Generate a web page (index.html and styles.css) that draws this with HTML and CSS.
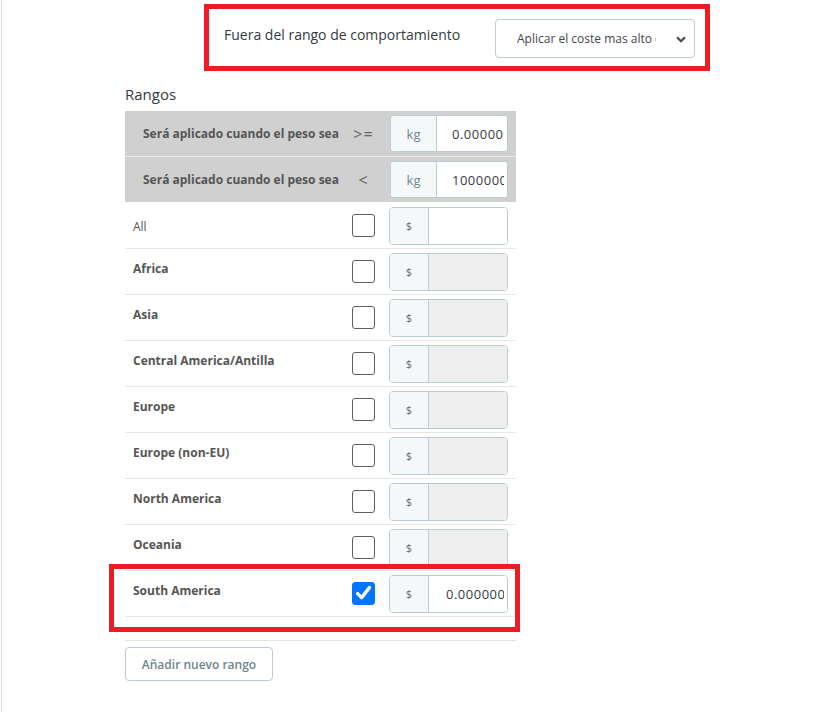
FILE: index.html
```html
<!DOCTYPE html>
<html lang="es">
<head>
<meta charset="utf-8">
<title>Rangos</title>
<link rel="stylesheet" href="styles.css">
</head>
<body>
<div class="page">
  <div class="behavior">
    <span class="behavior-label">Fuera del rango de comportamiento</span>
    <div class="select">
      <span class="select-text">Aplicar el coste mas alto definido</span>
      <svg class="chevron" width="10" height="7" viewBox="0 0 10 7"><path d="M1 1.2 L5 5.2 L9 1.2" fill="none" stroke="#4a4a4a" stroke-width="2.2"/></svg>
    </div>
  </div>

  <div class="ranges-title">Rangos</div>

  <div class="ranges">
    <div class="head-row first">
      <span class="head-label">Será aplicado cuando el peso sea</span>
      <span class="op">&gt;=</span>
      <div class="igroup head"><span class="addon">kg</span><span class="ival"><span class="ival-text">0.000000</span></span></div>
    </div>
    <div class="head-row second">
      <span class="head-label">Será aplicado cuando el peso sea</span>
      <span class="op">&lt;</span>
      <div class="igroup head"><span class="addon">kg</span><span class="ival"><span class="ival-text">1000000.000000</span></span></div>
    </div>

    <div class="zone-row">
      <span class="zone-label all">All</span>
      <span class="check"></span>
      <div class="igroup"><span class="addon cur">$</span><span class="ival"><span class="ival-text"></span></span></div>
    </div>
    <div class="zone-row">
      <span class="zone-label">Africa</span>
      <span class="check"></span>
      <div class="igroup"><span class="addon cur">$</span><span class="ival off"><span class="ival-text"></span></span></div>
    </div>
    <div class="zone-row">
      <span class="zone-label">Asia</span>
      <span class="check"></span>
      <div class="igroup"><span class="addon cur">$</span><span class="ival off"><span class="ival-text"></span></span></div>
    </div>
    <div class="zone-row">
      <span class="zone-label">Central America/Antilla</span>
      <span class="check"></span>
      <div class="igroup"><span class="addon cur">$</span><span class="ival off"><span class="ival-text"></span></span></div>
    </div>
    <div class="zone-row">
      <span class="zone-label">Europe</span>
      <span class="check"></span>
      <div class="igroup"><span class="addon cur">$</span><span class="ival off"><span class="ival-text"></span></span></div>
    </div>
    <div class="zone-row">
      <span class="zone-label">Europe (non-EU)</span>
      <span class="check"></span>
      <div class="igroup"><span class="addon cur">$</span><span class="ival off"><span class="ival-text"></span></span></div>
    </div>
    <div class="zone-row">
      <span class="zone-label">North America</span>
      <span class="check"></span>
      <div class="igroup"><span class="addon cur">$</span><span class="ival off"><span class="ival-text"></span></span></div>
    </div>
    <div class="zone-row">
      <span class="zone-label">Oceania</span>
      <span class="check"></span>
      <div class="igroup"><span class="addon cur">$</span><span class="ival off"><span class="ival-text"></span></span></div>
    </div>
    <div class="zone-row marked">
      <span class="zone-label">South America</span>
      <span class="check on"><svg width="23" height="23" viewBox="0 0 23 23"><path d="M5.6 11.6 L9.6 15.6 L17.4 5.6" fill="none" stroke="#fff" stroke-width="3.4" stroke-linecap="round" stroke-linejoin="round"/></svg></span>
      <div class="igroup"><span class="addon cur">$</span><span class="ival"><span class="ival-text">0.000000000</span></span></div>
      <span class="mark"></span>
    </div>
  </div>

  <div class="ranges-footer">
    <button class="add-btn" type="button">Añadir nuevo rango</button>
  </div>
</div>
</body>
</html>
```

FILE: styles.css
```css
* { box-sizing: border-box; }

html, body {
  margin: 0;
  padding: 0;
  background: #fff;
}

body {
  font-family: "Open Sans", "Liberation Sans", sans-serif;
  color: #363a41;
}

.page {
  margin-left: 1px;
  border-left: 1px solid #dcdcdc;
  min-height: 712px;
  padding-top: 4px;
}

/* top behaviour row */
.behavior {
  margin-left: 202px;
  width: 506px;
  height: 67px;
  border: 5px solid #ed1c24;
  display: flex;
  align-items: flex-start;
  justify-content: space-between;
  padding: 0 10px 0 15px;
}

.behavior-label {
  margin-top: 16px;
  font-size: 14px;
  line-height: 20px;
  color: #363a41;
  white-space: nowrap;
}

.select {
  margin-top: 10px;
  width: 200px;
  height: 39px;
  border: 1px solid #bbcdd2;
  border-radius: 4px;
  display: flex;
  align-items: center;
  padding: 0 8px 0 21px;
  background: #fff;
}

.select-text {
  display: block;
  width: 139px;
  overflow: hidden;
  white-space: nowrap;
  font-size: 12px;
  line-height: 18px;
  color: #44484f;
  margin-top: 1px;
}

.chevron {
  margin-left: auto;
  margin-right: 0;
  margin-top: 1px;
}

/* ranges */
.ranges-title {
  margin: 13px 0 0 123px;
  font-size: 15px;
  line-height: 20px;
  color: #363a41;
}

.ranges {
  margin: 7px 0 0 123px;
  width: 391px;
}

.head-row {
  height: 46px;
  background: #d0d0d0;
  display: grid;
  grid-template-columns: minmax(0, 1fr) 23px 118px;
  column-gap: 15px;
  align-items: center;
  padding: 0 8px 0 18px;
}

.head-row.first { border-bottom: 1px solid #e9e9e9; }
.head-row.second { border-bottom: 1px solid #fff; }

.head-label {
  font-size: 12px;
  font-weight: 700;
  color: #555;
  white-space: nowrap;
}

.op {
  text-align: center;
  font-size: 16px;
  color: #666;
  white-space: nowrap;
  letter-spacing: 1px;
}

.zone-row {
  position: relative;
  height: 46px;
  border-bottom: 1px solid #e6e6e6;
  display: grid;
  grid-template-columns: minmax(0, 1fr) 23px 119px;
  column-gap: 14px;
  align-items: center;
  padding: 0 8px;
}

.zone-label {
  font-size: 12px;
  font-weight: 700;
  color: #555;
  white-space: nowrap;
  margin-bottom: 7px;
}

.zone-label.all {
  font-weight: 400;
  margin-bottom: 0;
  margin-top: 1px;
}

.check {
  display: block;
  width: 23px;
  height: 23px;
  border: 1px solid #5f5f5f;
  border-radius: 3px;
  background: #fff;
}

.check.on {
  border-color: #0075ff;
  background: #0075ff;
  position: relative;
}

.check.on svg {
  position: absolute;
  left: -1px;
  top: -1px;
}

.igroup {
  height: 38px;
  border: 1px solid #bbcdd2;
  border-radius: 4px;
  display: flex;
  overflow: hidden;
  background: #fff;
}

.igroup.head { height: 37px; }

.addon {
  flex: 0 0 39px;
  border-right: 1px solid #bbcdd2;
  background: #f5f8f9;
  display: flex;
  align-items: center;
  justify-content: center;
  font-size: 12px;
  color: #6c868e;
}

.igroup.head .addon {
  flex-basis: 46px;
  font-size: 13px;
}

.addon.cur { font-size: 11px; color: #5d6f75; }

.ival {
  flex: 1;
  display: flex;
  align-items: center;
  padding: 0 3px 0 17px;
  background: #fff;
  min-width: 0;
}

.igroup.head .ival { padding-left: 15px; }

.ival.off { background: #eeeeee; }

.ival-text {
  display: block;
  width: 100%;
  overflow: hidden;
  white-space: nowrap;
  font-size: 13px;
  letter-spacing: 0.5px;
  color: #363a41;
}

.mark {
  position: absolute;
  top: -7px;
  left: -16px;
  right: -4px;
  bottom: -16px;
  border: 5px solid #ed1c24;
  pointer-events: none;
}

.ranges-footer {
  margin: 23px 0 0 123px;
  width: 391px;
  border-top: 1px solid #e3e3e3;
  padding-top: 6px;
}

.add-btn {
  display: flex;
  align-items: center;
  justify-content: center;
  width: 148px;
  height: 34px;
  border: 1px solid #bbcdd2;
  border-radius: 4px;
  background: #fff;
  font-family: "Open Sans", "Liberation Sans", sans-serif;
  font-size: 12px;
  font-weight: 600;
  color: #6c868e;
  padding: 0;
}
```
